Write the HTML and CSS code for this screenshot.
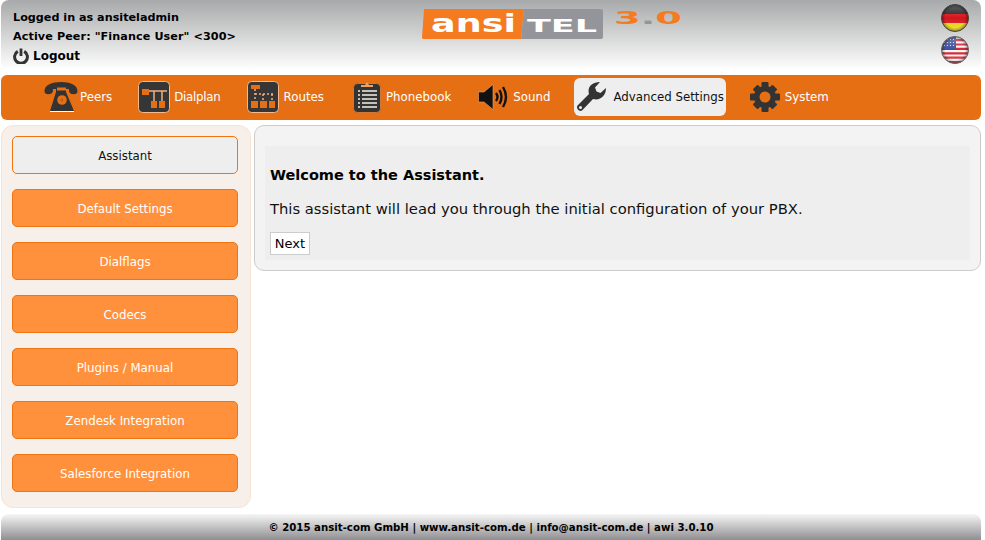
FILE: index.html
```html
<!DOCTYPE html>
<html lang="en">
<head>
<meta charset="utf-8">
<title>ansitel 3.0</title>
<link rel="stylesheet" href="styles.css">
</head>
<body>
<div class="page">
  <header class="header">
    <div class="user">
      <div class="user-line">Logged in as ansiteladmin</div>
      <div class="user-line user-peer">Active Peer: "Finance User" &lt;300&gt;</div>
      <div class="logout">
        <svg class="power" viewBox="0 0 16 16" width="16" height="16"><path d="M4.800 3.400A6.400 6.400 0 1 0 11.200 3.400" fill="none" stroke="#333" stroke-width="3"/><path d="M8 .5V8" stroke="#333" stroke-width="2.800"/></svg>
        <span>Logout</span>
      </div>
    </div>
    <div class="logo">
      <svg viewBox="0 0 262 32" width="262" height="32">
        <path d="M3 0H102L99 30H1Q0 30 0 28L2 1Q2 0 3 0Z" fill="#f57b20"/>
        <path d="M102 0H179Q181 0 181 2V28Q181 30 179 30H99Z" fill="#94959a"/>
        <text x="9" y="23" class="logo-ansi" textLength="85" lengthAdjust="spacingAndGlyphs">ansi</text>
        <text x="105" y="23" class="logo-tel" textLength="70" lengthAdjust="spacingAndGlyphs">TEL</text>
        <text x="192" y="15" class="logo-ver" textLength="68" lengthAdjust="spacingAndGlyphs">3<tspan class="logo-dot">.</tspan>0</text>
      </svg>
    </div>
    <div class="flags">
      <svg class="flag" viewBox="0 0 28 28" width="28" height="28">
        <defs>
          <clipPath id="clip-de"><circle cx="14" cy="14" r="13.500"/></clipPath>
          <clipPath id="clip-us"><circle cx="14" cy="14" r="13.500"/></clipPath>
          <linearGradient id="gloss" x1="0" y1="0" x2="0" y2="1"><stop offset="0" stop-color="#fff" stop-opacity=".3"/><stop offset=".5" stop-color="#fff" stop-opacity="0"/><stop offset="1" stop-color="#fff" stop-opacity=".2"/></linearGradient>
          <radialGradient id="ball"><stop offset=".7" stop-color="#000" stop-opacity="0"/><stop offset="1" stop-color="#000" stop-opacity=".45"/></radialGradient>
        </defs>
        <g clip-path="url(#clip-de)">
          <rect width="28" height="10" fill="#262626"/>
          <rect y="10" width="28" height="9" fill="#d5141c"/>
          <rect y="19" width="28" height="9" fill="#e8d20e"/>
          <rect width="28" height="28" fill="url(#gloss)"/>
          <rect width="28" height="28" fill="url(#ball)"/>
        </g>
        <circle cx="14" cy="14" r="13.500" fill="none" stroke="#444"/>
      </svg>
      <svg class="flag" viewBox="0 0 28 28" width="28" height="28">
        <g clip-path="url(#clip-us)">
          <rect width="28" height="28" fill="#f4f4f4"/>
          <path d="M0 3h28v2.200H0zM0 7.400h28v2.200H0zM0 11.800h28V14H0zM0 16.200h28v2.200H0zM0 20.600h28v2.200H0zM0 25h28v3H0z" fill="#d2232f"/>
          <rect width="15" height="14" fill="#3d4e9c"/>
          <path d="M3 6h1v1H3zM6 3h1v1H6zM6 6h1v1H6zM9 3h1v1H9zM9 6h1v1H9zM12 3h1v1h-1zM12 6h1v1h-1zM3 9h1v1H3zM6 9h1v1H6zM9 9h1v1H9zM12 9h1v1h-1z" fill="#dfe3f2"/>
          <rect width="28" height="28" fill="url(#gloss)"/>
          <rect width="28" height="28" fill="url(#ball)"/>
        </g>
        <circle cx="14" cy="14" r="13.500" fill="none" stroke="#666"/>
      </svg>
    </div>
  </header>

  <nav class="nav">
    <div class="nav-item nav-peers">
      <svg class="nav-icon" width="34" height="32" viewBox="0 0 34 32">
        <path d="M.5 10C.5 4 8 1 17 1S33.500 4 33.500 10C33.500 13 31 13.500 28 13 25 12.500 25 10 25 8H9C9 10 9 12.500 6 13 3 13.500 .5 13 .5 10Z" fill="#333"/>
        <path d="M12 7H22V11L30 30H6L12 11Z" fill="#333"/>
        <path d="M6 30.500H30" stroke="#fff" stroke-width="1"/>
        <rect x="13" y="6.500" width="9" height="3" fill="#e66f14"/>
        <circle cx="18" cy="19" r="4.800" fill="#e66f14"/>
        <circle cx="18" cy="19" r="1.500" fill="#b8601c"/>
      </svg>
      <span>Peers</span>
    </div>
    <div class="nav-item nav-dial">
      <svg class="nav-icon" width="32" height="32" viewBox="0 0 32 32">
        <rect x=".5" y=".5" width="31" height="31" rx="4" fill="#363636" stroke="#f6b98b"/>
        <rect x="4" y="8" width="7" height="6" fill="#e66f14"/>
        <path d="M11 10H29" stroke="#f2b080" stroke-width="1.500"/>
        <path d="M16 10V21M24 10V21" stroke="#f2b080" stroke-width="1.500"/>
        <rect x="13" y="20" width="6" height="7" fill="#e66f14"/>
        <rect x="21" y="20" width="6" height="7" fill="#e66f14"/>
      </svg>
      <span>Dialplan</span>
    </div>
    <div class="nav-item nav-routes">
      <svg class="nav-icon" width="32" height="32" viewBox="0 0 32 32">
        <rect x=".5" y=".5" width="31" height="31" rx="4" fill="#363636" stroke="#f6b98b"/>
        <rect x="4" y="4" width="9" height="4" fill="#e66f14"/>
        <path d="M8 8V19M8 13H27M16 13V19M25 13V19" stroke="#f2b080" stroke-width="1.500" stroke-dasharray="2 2"/>
        <rect x="4" y="20" width="7" height="7" fill="#e66f14"/>
        <rect x="13" y="20" width="7" height="7" fill="#e66f14"/>
        <rect x="22" y="20" width="6" height="7" fill="#e66f14"/>
      </svg>
      <span>Routes</span>
    </div>
    <div class="nav-item nav-book">
      <svg class="nav-icon" width="28" height="32" viewBox="0 0 28 32">
        <rect x=".5" y="2.500" width="27" height="29" rx="4" fill="#333" stroke="#c97a3c"/>
        <path d="M8 4H12L14 1 16 4H20V6H8Z" fill="#f0a060"/>
        <path d="M9 10H24M9 14H24M9 18H24M9 22H24M9 26H24" stroke="#f6f0e8" stroke-width="1.500"/>
        <path d="M5 10H7M5 14H7M5 18H7M5 22H7M5 26H7" stroke="#f6f0e8" stroke-width="1.500"/>
      </svg>
      <span>Phonebook</span>
    </div>
    <div class="nav-item nav-sound">
      <svg class="nav-icon" width="30" height="26" viewBox="0 0 30 26">
        <path d="M.5 8H6L15 .5V25.500L6 18H.5Z" fill="#111" stroke="#f2a468" stroke-width=".6"/>
        <path d="M18 9Q21 13 18 17M21.500 6Q25.500 13 21.500 20M25 3Q31 13 25 23" fill="none" stroke="#111" stroke-width="2.400"/>
      </svg>
      <span>Sound</span>
    </div>
    <div class="nav-item nav-active">
      <svg class="nav-icon" width="30" height="30" viewBox="0 0 30 30">
        <path d="M2 23L13 12C11 5 16 0 24 0L19 5.500 20.500 9.500 24.500 11 30 6C30 14 24 19 17 17L6.500 28C3.500 31 -1 26 2 23Z" fill="#333"/>
        <circle cx="4.500" cy="25.500" r="1.500" fill="#eee"/>
      </svg>
      <span>Advanced Settings</span>
    </div>
    <div class="nav-item nav-system">
      <svg class="nav-icon" width="30" height="30" viewBox="0 0 30 30">
        <g fill="#333">
          <circle cx="15" cy="15" r="11"/>
          <rect x="11.500" y="0" width="7" height="30" rx="1"/>
          <rect x="0" y="11.500" width="30" height="7" rx="1"/>
          <rect x="11.500" y="1" width="7" height="28" rx="1" transform="rotate(45 15 15)"/>
          <rect x="11.500" y="1" width="7" height="28" rx="1" transform="rotate(-45 15 15)"/>
        </g>
        <circle cx="15" cy="15" r="5.500" fill="#e66f14"/>
      </svg>
      <span>System</span>
    </div>
  </nav>

  <div class="main">
    <aside class="sidebar">
      <div class="side-btn side-active">Assistant</div>
      <div class="side-btn">Default Settings</div>
      <div class="side-btn">Dialflags</div>
      <div class="side-btn">Codecs</div>
      <div class="side-btn">Plugins / Manual</div>
      <div class="side-btn">Zendesk Integration</div>
      <div class="side-btn">Salesforce Integration</div>
    </aside>
    <section class="content">
      <div class="panel">
        <h1 class="title">Welcome to the Assistant.</h1>
        <p class="intro">This assistant will lead you through the initial configuration of your PBX.</p>
        <button class="next" type="button">Next</button>
      </div>
    </section>
  </div>

  <footer class="footer">© 2015 ansit-com GmbH | www.ansit-com.de | info@ansit-com.de | awi 3.0.10</footer>
</div>
</body>
</html>
```
FILE: styles.css
```css
* { box-sizing: border-box; }
html, body { margin: 0; padding: 0; height: 100%; background: #fff; overflow: hidden; }
body { font-family: "DejaVu Sans", sans-serif; font-size: 13px; color: #000; }
.page { width: 985px; height: 540px; padding: 0 4px 0 1px; display: flex; flex-direction: column; }

.header { height: 70px; flex: none; display: flex; background: linear-gradient(#a8a9aa, #ffffff); border-radius: 8px; padding: 0 12px; }
.user { width: 409px; padding-top: 9px; font-size: 11.200px; font-weight: bold; }
.user-line { height: 19px; line-height: 17px; }
.user-peer { letter-spacing: .09px; }
.logout { display: flex; align-items: center; gap: 4px; font-size: 12px; margin-top: 1px; }
.power { display: block; }
.logo { width: 263px; padding-top: 9px; }
.logo svg { display: block; overflow: visible; }
.logo-ansi { font: bold 25px "DejaVu Sans", sans-serif; fill: #fff; }
.logo-tel { font: bold 18px "DejaVu Sans", sans-serif; fill: #fff; }
.logo-ver { font: bold 17px "DejaVu Sans", sans-serif; fill: #f57b20; }
.logo-dot { fill: #94959a; }
.flags { margin-left: auto; padding-top: 4px; display: flex; flex-direction: column; gap: 4px; }
.flag { display: block; }

.nav { height: 45px; flex: none; margin-top: 5px; background: #e66f14; border-radius: 6px; display: flex; align-items: center; padding: 3px 0 4px 41px; gap: 21px; color: #fff; font-size: 11.800px; }
.nav-item { height: 38px; display: flex; align-items: center; padding: 0 3px 0 2px; border-radius: 6px; white-space: nowrap; }
.nav-icon { display: block; flex: none; margin-right: 3px; }
.nav-peers .nav-icon { margin-right: 2px; }
.nav-dial .nav-icon { margin-right: 4px; }
.nav-dial span { letter-spacing: -.25px; }
.nav-routes { padding-right: 6px; }
.nav-routes .nav-icon { margin-right: 5px; }
.nav-book { padding-right: 4px; }
.nav-book .nav-icon { margin-right: 5px; }
.nav-sound .nav-icon { margin-right: 5px; }
.nav-active { background: #eeeeee; color: #111; padding-right: 2px; margin-right: 1px; }
.nav-active .nav-icon { margin-right: 7px; }
.nav-system .nav-icon { margin-right: 5px; }

.main { flex: 1; display: flex; align-items: flex-start; margin-top: 5px; gap: 3px; }
.sidebar { width: 250px; height: 383px; background: #f7efe9; border: 1px solid #f9e4d3; border-radius: 12px; padding: 10px 12px 0 10px; display: flex; flex-direction: column; gap: 15px; }
.side-btn { height: 38px; flex: none; display: flex; align-items: center; justify-content: center; padding-top: 2px; background: #ff913c; border: 1px solid #ef7413; border-radius: 5px; color: #fff; font-size: 11.800px; }
.side-active { background: #eeeeee; color: #111; }

.content { flex: 1; height: 146px; background: #f3f3f3; border: 1px solid #cccccc; border-radius: 10px; padding: 20px 10px 10px 10px; }
.panel { height: 114px; background: #eeeeee; padding: 21px 5px 0 5px; }
.title { margin: 0; font-size: 14.500px; font-weight: bold; line-height: 17px; }
.intro { margin: 16px 0 0; font-size: 14.750px; line-height: 17px; color: #111; }
.next { display: block; margin: 15px 0 0; width: 40px; height: 23px; padding: 0; background: #fff; border: 1px solid #ccc; font: 13px "DejaVu Sans", sans-serif; color: #000; }

.footer { height: 26px; flex: none; margin-top: 6px; background: linear-gradient(#f6f6f6, #8f8f92); border-radius: 8px 8px 0 0; text-align: center; font-size: 10.200px; font-weight: bold; line-height: 27px; }
```
